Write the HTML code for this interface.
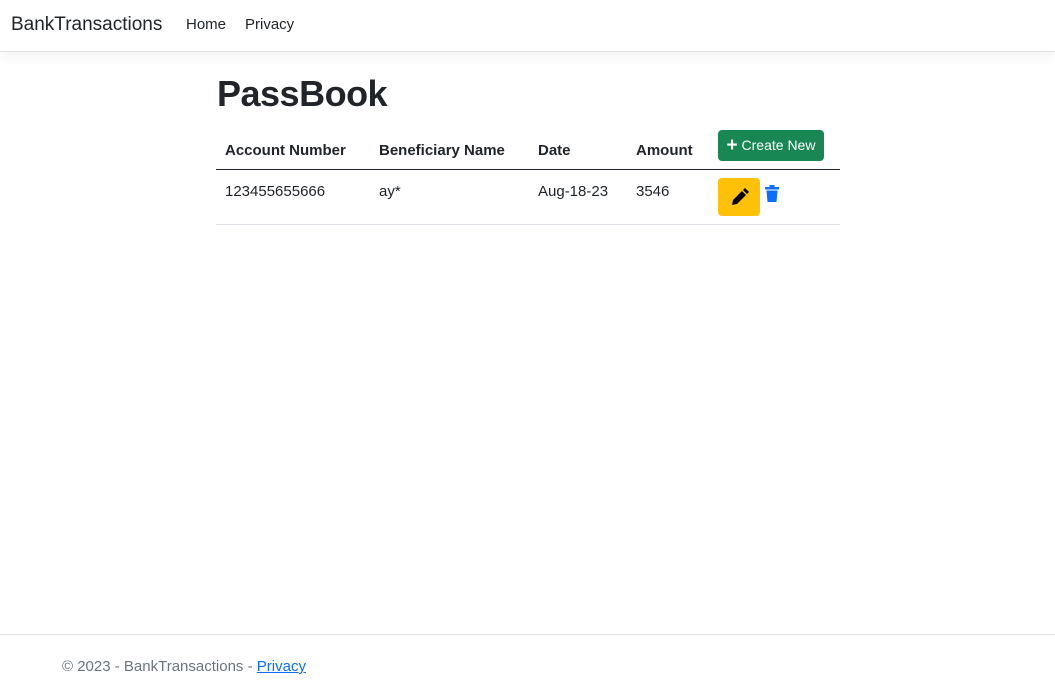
<!DOCTYPE html>
<html><head><meta charset="utf-8"><style>
body{margin:0;font-family:"Liberation Sans",sans-serif;color:#212529;background:#fff;width:1055px;height:693px;position:relative;overflow:hidden}
.nav{height:51px;border-bottom:1px solid #dee2e6;box-shadow:0 4px 12px rgba(0,0,0,.05);position:relative}
.brand{position:absolute;left:11px;top:14px;font-size:19px}
.link{position:absolute;top:16px;font-size:15px}
h1{position:absolute;left:217px;top:73px;margin:0;font-size:36px;font-weight:bold;letter-spacing:-0.5px}
.t{position:absolute;font-size:15px}
.b{font-weight:bold}
.line1{position:absolute;left:216px;top:169px;width:624px;height:1px;background:#212529}
.line2{position:absolute;left:216px;top:224px;width:624px;height:1px;background:#dee2e6}
.create{position:absolute;left:718px;top:130px;width:106px;height:31px;background:#198754;border-radius:4px;color:#fff;font-size:14px;line-height:31px;text-align:center}
.edit{position:absolute;left:718px;top:178px;width:42px;height:38px;background:#ffc107;border-radius:4px}
.foot{position:absolute;left:0;top:634px;width:1055px;border-top:1px solid #dee2e6}
</style></head><body>
<div class="nav"><span class="brand">BankTransactions</span><span class="link" style="left:186px">Home</span><span class="link" style="left:245px">Privacy</span></div>
<h1>PassBook</h1>
<span class="t b" style="left:225px;top:142px">Account Number</span>
<span class="t b" style="left:379px;top:142px">Beneficiary Name</span>
<span class="t b" style="left:538px;top:142px">Date</span>
<span class="t b" style="left:636px;top:142px">Amount</span>
<div class="create"><b style="font-size:19px;vertical-align:-1px">+</b> Create New</div>
<div class="line1"></div>
<span class="t" style="left:225px;top:183px">123455655666</span>
<span class="t" style="left:379px;top:183px">ay*</span>
<span class="t" style="left:538px;top:183px">Aug-18-23</span>
<span class="t" style="left:636px;top:183px">3546</span>
<div class="edit"><svg width="42" height="38" viewBox="0 0 42 38"><path d="M14 27l1-5 9-9 4 4-9 9z M25 12l2-2 4 4-2 2z" fill="#000"/></svg></div>
<svg style="position:absolute;left:764px;top:185px" width="16" height="18" viewBox="0 0 16 18"><rect x="1" y="2" width="14" height="2.5" fill="#0d6efd"/><rect x="5.5" y="0" width="5" height="2.5" fill="#0d6efd"/><path d="M2.5 5.5h11l-1 11.5h-9z" fill="#0d6efd"/></svg>
<div class="line2"></div>
<div class="foot"></div>
<span class="t" style="left:62px;top:658px;color:#6c757d">© 2023 - BankTransactions - <span style="color:#0d6efd;text-decoration:underline">Privacy</span></span>
</body></html>
